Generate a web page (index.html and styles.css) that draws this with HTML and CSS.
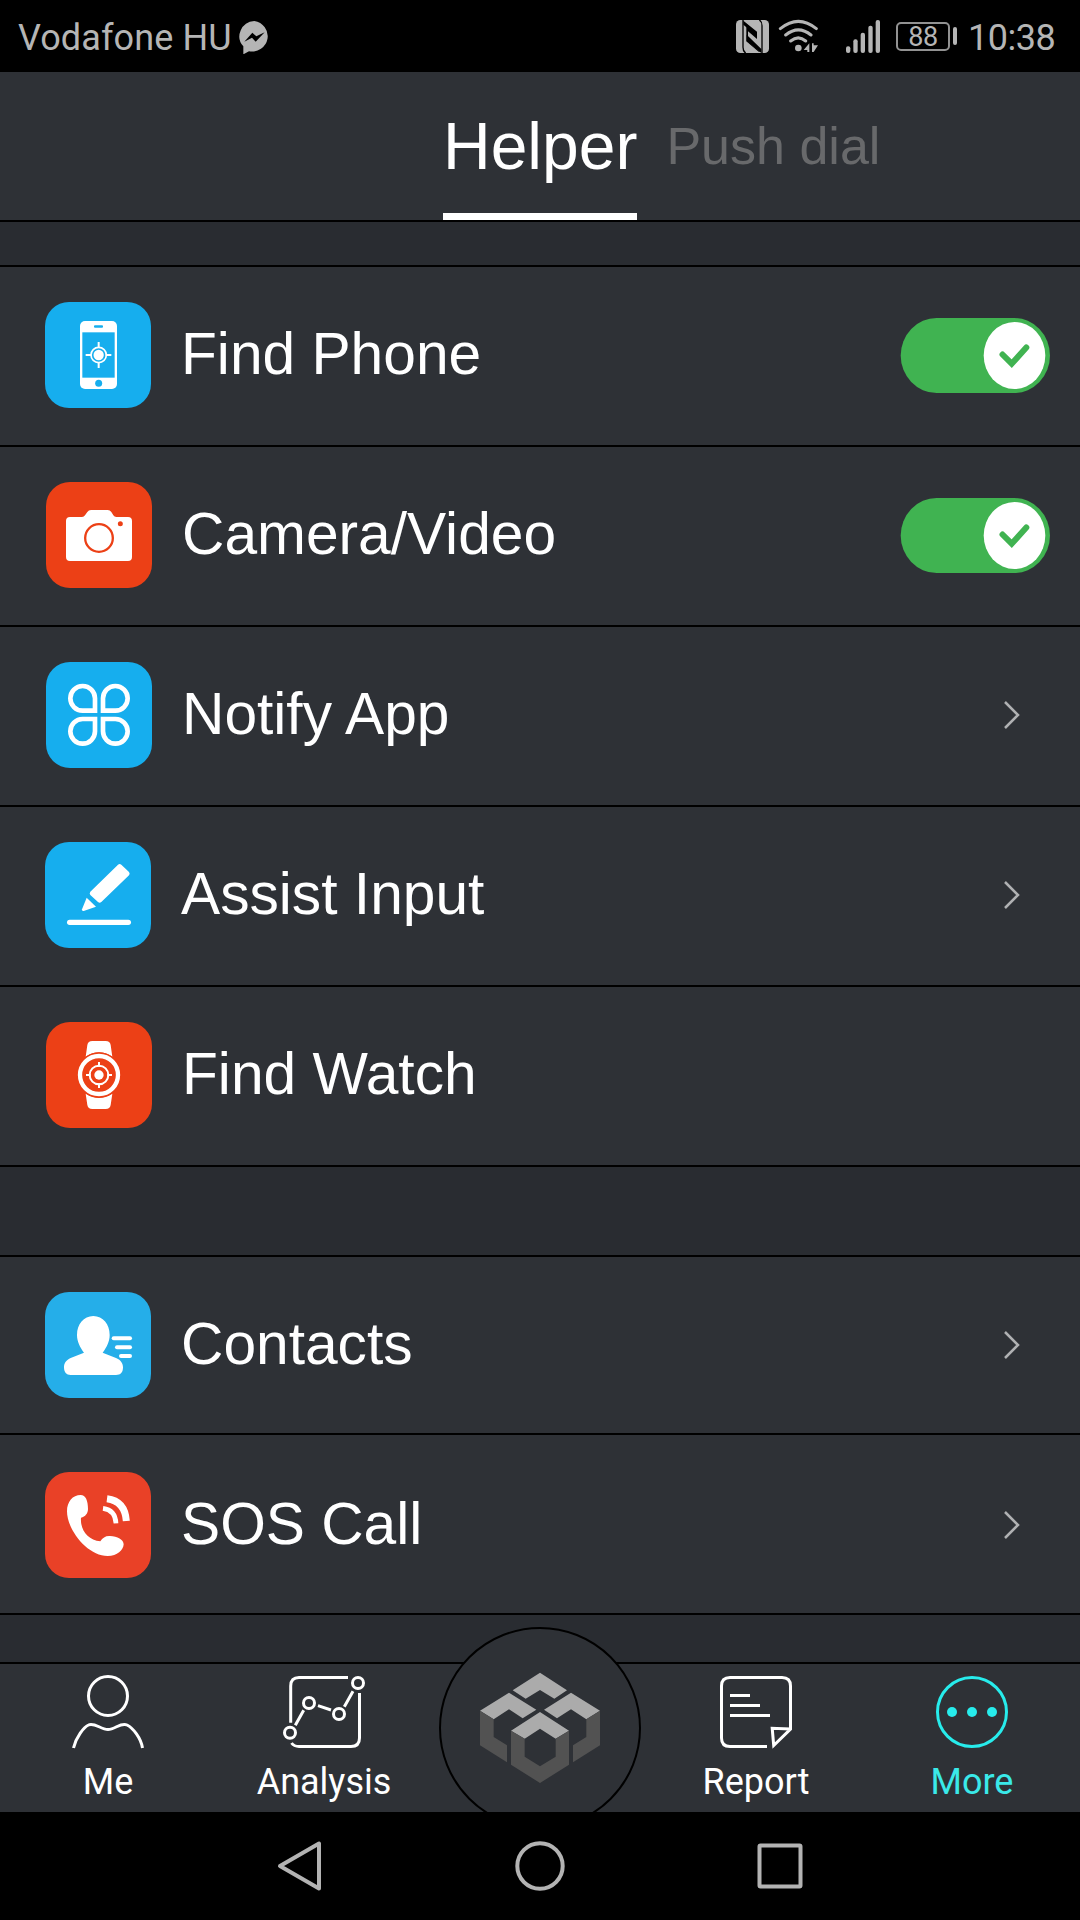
FILE: index.html
```
<!DOCTYPE html>
<html lang="en">
<head>
    <meta charset="UTF-8">
    <meta name="viewport" content="width=device-width, initial-scale=1.0">
    <title>Helper</title>
    <link rel="stylesheet" href="styles.css">
</head>
<body>
    <div class="screen">
        <!-- Status bar -->
        <div class="status-bar">
            <span class="carrier">Vodafone HU</span>
            <svg class="messenger" viewBox="714 61 99 99">
                <path d="M763 61a48 46 0 1 1-16 91l-17 9v-24A48 46 0 0 1 763 61z" fill="#b5b5b5"/>
                <path d="M733 123l24-27 12 11 25-12-27 28-11-12z" fill="#000"/>
            </svg>
            <div class="status-right">
                <svg class="nfc" viewBox="48 60 99 99">
                    <rect x="48" y="60" width="99" height="99" rx="13" fill="#b5b5b5"/>
                    <path d="M69 60v82q0 12 8 17M126 159V77q0-12-8-17" fill="none" stroke="#000" stroke-width="4"/>
                    <path d="M70 64l41 36v17L84 94v31l37 30h-5L79 124V82z" fill="#000"/>
                    <path d="M70 62l41 33v12L70 74zM80 104l44 43v12L80 124z" fill="#000"/>
                </svg>
                <svg class="wifi" viewBox="174 57 123 102">
                    <path d="M181 86Q235 42 289 86M197 105Q235 74 273 105M212 123Q235 104 257 123" fill="none" stroke="#b5b5b5" stroke-width="9" stroke-linecap="round"/>
                    <circle cx="235" cy="144" r="10" fill="#b5b5b5"/>
                    <path d="M251 150l17-20v26h-6v-6zM276 130h5v6h13l-13 20h-5z" fill="#b5b5b5"/>
                </svg>
                <svg class="signal" viewBox="378 57 102 99" fill="#b5b5b5">
                    <rect x="378" y="136" width="13" height="20" rx="6"/>
                    <rect x="400" y="115" width="13" height="41" rx="6"/>
                    <rect x="422" y="95" width="13" height="61" rx="6"/>
                    <rect x="445" y="74" width="13" height="82" rx="6"/>
                    <rect x="467" y="57" width="13" height="99" rx="6"/>
                </svg>
                <div class="battery"><span>88</span></div>
                <div class="battery-tip"></div>
                <span class="clock">10:38</span>
            </div>
        </div>

        <!-- Top tabs -->
        <div class="header">
            <div class="tab active">Helper</div>
            <div class="tab">Push dial</div>
        </div>

        <!-- Options -->
        <div class="list first">
            <div class="row">
                <svg class="tile blue" viewBox="45 36 318 318">
                    <rect x="150" y="93" width="111" height="204" rx="15" fill="#fff"/>
                    <rect x="157" y="127" width="97" height="136" fill="#16aeee"/>
                    <rect x="192" y="106" width="27" height="7" rx="3" fill="#16aeee"/>
                    <circle cx="206" cy="280" r="10.5" fill="#16aeee"/>
                    <path d="M206 156v17M206 217v17M167 195h17M227 195h17" stroke="#fff" stroke-width="6"/>
                    <circle cx="206" cy="195" r="23" fill="none" stroke="#fff" stroke-width="5"/>
                    <circle cx="206" cy="195" r="15.500" fill="#fff"/>
                </svg>
                <span class="label">Find Phone</span>
                <svg class="toggle" viewBox="0 0 150 75">
                    <rect x="0.700" y="0" width="149.300" height="75" rx="36" ry="37.500" fill="#40b351"/>
                    <ellipse cx="114.500" cy="37.500" rx="30.800" ry="33.500" fill="#fff"/>
                    <path d="M102.500 36.500l9.200 9.200 14.600-16.200" fill="none" stroke="#40b351" stroke-width="6" stroke-linecap="round"/>
                </svg>
            </div>
            <div class="row">
                <svg class="tile orange shifted" viewBox="48 576 318 318">
                    <path d="M120 681h36q6 0 9-5l7-10q4-6 11-6h50q7 0 11 6l6 10q3 5 9 5h35q12 0 12 12v108q0 12-12 12H120q-12 0-12-12V693q0-12 12-12z" fill="#fff"/>
                    <circle cx="207" cy="744" r="41.500" fill="none" stroke="#ec4016" stroke-width="7"/>
                    <circle cx="271" cy="701" r="7.500" fill="#ec4016"/>
                </svg>
                <span class="label">Camera/Video</span>
                <svg class="toggle" viewBox="0 0 150 75">
                    <rect x="0.700" y="0" width="149.300" height="75" rx="36" ry="37.500" fill="#40b351"/>
                    <ellipse cx="114.500" cy="37.500" rx="30.800" ry="33.500" fill="#fff"/>
                    <path d="M102.500 36.500l9.200 9.200 14.600-16.200" fill="none" stroke="#40b351" stroke-width="6" stroke-linecap="round"/>
                </svg>
            </div>
            <div class="row">
                <svg class="tile blue shifted" viewBox="48 36 318 318">
                    <g fill="none" stroke="#fff" stroke-width="14">
                        <path d="M195 182h-37a37 37 0 1 1 37-37z"/>
                        <path d="M219 182h37a37 37 0 1 0-37-37z"/>
                        <path d="M195 207h-37a37 37 0 1 0 37 37z"/>
                        <path d="M219 207h37a37 37 0 1 1-37 37z"/>
                    </g>
                </svg>
                <span class="label">Notify App</span>
                <svg class="chevron" viewBox="0 0 20 30"><path d="M3 2l13 13L3 28"/></svg>
            </div>
            <div class="row">
                <svg class="tile blue" viewBox="45 576 318 318" fill="#fff">
                    <path d="M264 644q5-4 10 0l23 22q4 5 0 10l-83 80q-5 5-10 0l-23-21q-4-5 0-10z"/>
                    <path d="M170 743l28 27-37 13q-6 1-5-5z"/>
                    <rect x="111" y="809" width="192" height="16" rx="8"/>
                </svg>
                <span class="label">Assist Input</span>
                <svg class="chevron" viewBox="0 0 20 30"><path d="M3 2l13 13L3 28"/></svg>
            </div>
            <div class="row">
                <svg class="tile orange shifted" viewBox="48 66 318 318">
                    <path d="M187 123h40q13 0 15 12l5 35q-40-26-80 0l5-35q2-12 15-12zM187 327h40q13 0 15-12l5-34q-40 26-80 0l5 34q2 12 15 12z" fill="#fff"/>
                    <circle cx="207" cy="225" r="68" fill="#ec4016"/>
                    <circle cx="207" cy="225" r="57" fill="none" stroke="#fff" stroke-width="13"/>
                    <circle cx="207" cy="225" r="28" fill="none" stroke="#fff" stroke-width="6"/>
                    <circle cx="207" cy="225" r="14" fill="#fff"/>
                    <path d="M207 186v14M207 250v14M168 225h14M232 225h14" stroke="#fff" stroke-width="6"/>
                </svg>
                <span class="label">Find Watch</span>
            </div>
        </div>

        <div class="list second">
            <div class="row short">
                <svg class="tile sky" viewBox="45 156 318 318" fill="#fff">
                    <path d="M190 228c29 0 49 25 49 57 0 20-9 37-21 53l40 16c13 5 21 15 21 28 0 16-7 23-21 23H122c-13 0-20-8-20-23 0-13 7-22 20-28l40-16c-12-16-21-33-21-53 0-32 20-57 49-57z"/>
                    <rect x="245" y="289" width="61" height="12" rx="6"/>
                    <rect x="255" y="316" width="51" height="12" rx="6"/>
                    <rect x="267" y="342" width="39" height="12" rx="6"/>
                </svg>
                <span class="label">Contacts</span>
                <svg class="chevron" viewBox="0 0 20 30"><path d="M3 2l13 13L3 28"/></svg>
            </div>
            <div class="row low">
                <svg class="tile red" viewBox="45 696 318 318">
                    <path d="M152 765c15 0 22 17 22 42 0 13-8 23-21 26-3 36 20 67 58 71 7-11 16-17 29-16 22 1 41 11 41 25-1 17-19 35-48 35-60 0-122-78-122-134 0-29 17-49 41-49z" fill="#fff"/>
                    <path d="M219 805q37 5 39 45" fill="none" stroke="#fff" stroke-width="14"/>
                    <path d="M231 776q54 7 58 67" fill="none" stroke="#fff" stroke-width="21"/>
                </svg>
                <span class="label">SOS Call</span>
                <svg class="chevron" viewBox="0 0 20 30"><path d="M3 2l13 13L3 28"/></svg>
            </div>
        </div>

        <!-- Bottom tabs -->
        <div class="tab-bar">
            <div class="item">
                <svg class="icon" viewBox="0 0 84 78">
                    <circle cx="42" cy="24" r="19.500"/>
                    <path d="M7.500 76C10 65 18 55 22.500 53 28 50 35 57.500 42 57.500S55 50 61 53C67 56 75 66 76.500 76"/>
                </svg>
                <span>Me</span>
            </div>
            <div class="item">
                <svg class="icon" viewBox="0 0 84 78">
                    <path d="M66 5.500H17Q8.700 5.500 8.700 14V50.700M9.500 71Q12 74.500 17 74.500H69Q77.500 74.500 77.500 66V21"/>
                    <path d="M13.300 53.300l8.400-15M36 33.700L49 38M62.300 34.700L71 19.300"/>
                    <circle cx="8" cy="60.700" r="5.500"/>
                    <circle cx="27" cy="31" r="5.500"/>
                    <circle cx="57" cy="42" r="5.500"/>
                    <circle cx="76" cy="11" r="5.500"/>
                </svg>
                <span>Analysis</span>
            </div>
            <div class="item"></div>
            <div class="item">
                <svg class="icon" viewBox="0 0 84 78">
                    <path d="M53 74.500H16Q7.500 74.500 7.500 66V14Q7.500 5.500 16 5.500H68Q76.500 5.500 76.500 14V57L59.700 73.500 58.200 56.200 76.500 57"/>
                    <path d="M16 23.500H36M16 33.500H46M16 43.500H56"/>
                </svg>
                <span>Report</span>
            </div>
            <div class="item selected">
                <svg class="icon" viewBox="0 0 84 78">
                    <circle cx="42" cy="40" r="34.500"/>
                    <g fill="#27ecec" stroke="none">
                        <circle cx="22" cy="40" r="5"/>
                        <circle cx="42" cy="40" r="5"/>
                        <circle cx="62" cy="40" r="5"/>
                    </g>
                </svg>
                <span>More</span>
            </div>

            <!-- Home button over the bar -->
            <svg class="home" viewBox="57 81 606 555">
                <circle cx="360" cy="384" r="300" fill="#2e3136" stroke="#000" stroke-width="6"/>
                <g fill="#ababab">
                    <path d="M360 218l81 53-38 25-43-26-43 26-39-25z"/>
                    <path d="M267 278l82 51-41 26-41-27-46 30-41-26z"/>
                    <path d="M453 278l87 54-41 26-46-30-42 27-39-26z"/>
                    <path d="M360 336l87 56-40 24-47-30-46 30-41-24z"/>
                </g>
                <g fill="#525252">
                    <path d="M180 332l41 26v53l40 25v51l-81-51z"/>
                    <path d="M540 332l-41 26v53l-40 25v51l81-51z"/>
                    <path d="M273 392l41 24v54l46 29 47-29v-54l40-24v102l-87 55-87-55z"/>
                </g>
            </svg>
        </div>

        <!-- Android navigation -->
        <div class="nav-bar">
            <svg viewBox="0 0 54 54"><path d="M46 4.500V49.500L7 27z"/></svg>
            <svg viewBox="0 0 54 54"><circle cx="27" cy="27" r="22.700"/></svg>
            <svg viewBox="0 0 54 54"><rect x="6.500" y="6.500" width="41" height="41" rx="1"/></svg>
        </div>
    </div>
</body>
</html>
```
FILE: styles.css
```
* {
    box-sizing: border-box;
}

body {
    margin: 0;
    background-color: #000;
    font-family: "Liberation Sans", Arial, sans-serif;
    color: #fff;
}

svg {
    display: block;
    flex-shrink: 0;
}

.screen {
    width: 1080px;
    height: 1920px;
    display: flex;
    flex-direction: column;
    overflow: hidden;
    background-color: #292c31;
}

/* Status bar */
.status-bar {
    height: 72px;
    padding: 0 25px 0 18px;
    display: flex;
    align-items: center;
    background-color: #000;
    color: #b5b5b5;
    font-family: Roboto, sans-serif;
    font-size: 36px;
    line-height: 42px;
}

.carrier {
    padding-top: 4px;
    width: 220px;
    white-space: nowrap;
    letter-spacing: 0.1px;
}

.messenger {
    width: 33px;
    height: 33px;
    margin-top: 2px;
}

.status-right {
    margin-left: auto;
    display: flex;
    align-items: center;
}

.nfc {
    width: 33px;
    height: 33px;
}

.wifi {
    width: 41px;
    height: 34px;
    margin-left: 9px;
}

.signal {
    width: 34px;
    height: 33px;
    margin-left: 27px;
}

.battery {
    width: 54px;
    height: 29px;
    margin-left: 16px;
    border: 2px solid #929292;
    border-radius: 5px;
    display: flex;
    align-items: center;
    justify-content: center;
    font-size: 27px;
    line-height: 27px;
    letter-spacing: -0.5px;
}

.battery span {
    padding-top: 2px;
}

.battery-tip {
    width: 4px;
    height: 18px;
    margin-left: 3px;
    border-radius: 2px;
    background-color: #b5b5b5;
}

.clock {
    width: 87px;
    margin-left: 11px;
    padding-top: 4px;
    white-space: nowrap;
    letter-spacing: -0.5px;
}

/* Top tabs */
.header {
    height: 150px;
    padding-left: 443px;
    display: flex;
    gap: 29px;
    background-color: #2e3136;
    border-bottom: 2px solid #000;
}

.tab {
    height: 148px;
    padding-top: 2px;
    font-size: 52px;
    line-height: 144px;
    white-space: nowrap;
    color: #68696b;
}

.tab.active {
    font-size: 66px;
    color: #fff;
    border-bottom: 7px solid #fff;
}

/* Options */
.list {
    border-top: 2px solid #000;
}

.first {
    margin-top: 43px;
}

.second {
    margin-top: 88px;
}

.row {
    height: 180px;
    padding: 35px 30px 0 45px;
    display: flex;
    align-items: flex-start;
    background-color: #2e3136;
    border-bottom: 2px solid #000;
}

.row.short {
    height: 178px;
}

.row.low {
    padding-top: 37px;
}

.tile {
    width: 106px;
    height: 106px;
    border-radius: 24px;
}

.tile.shifted {
    margin-left: 1px;
}

.blue {
    background-color: #16aeee;
}

.orange {
    background-color: #ec4016;
}

.sky {
    background-color: #25aee9;
}

.red {
    background-color: #e94127;
}

.label {
    margin-left: 30px;
    font-size: 58.700px;
    line-height: 104px;
    white-space: nowrap;
}

.toggle {
    width: 150px;
    height: 75px;
    margin: 16px 0 0 auto;
}

.chevron {
    width: 20px;
    height: 30px;
    margin: 38px 28px 0 auto;
    fill: none;
    stroke: #b0b1b3;
    stroke-width: 2.500;
}

/* Bottom tabs */
.tab-bar {
    position: relative;
    height: 150px;
    margin-top: 47px;
    display: grid;
    grid-template-columns: repeat(5, 1fr);
    background-color: #2e3136;
    border-top: 2px solid #000;
    font-family: Roboto, sans-serif;
    font-size: 36px;
    line-height: 42px;
}

.item {
    padding-top: 8px;
    display: flex;
    flex-direction: column;
    align-items: center;
    gap: 11px;
}

.icon {
    width: 84px;
    height: 78px;
    fill: none;
    stroke: #fff;
    stroke-width: 3;
}

.selected {
    color: #3ae9e9;
}

.selected .icon {
    stroke: #27ecec;
}

.home {
    position: absolute;
    left: 439px;
    bottom: 0;
    width: 202px;
    height: 185px;
}

/* Android navigation */
.nav-bar {
    height: 108px;
    padding: 0 273px;
    display: flex;
    align-items: center;
    justify-content: space-between;
    background-color: #000;
}

.nav-bar svg {
    width: 54px;
    height: 54px;
    fill: none;
    stroke: #b3b3b3;
    stroke-width: 4;
    stroke-linejoin: round;
}
```
